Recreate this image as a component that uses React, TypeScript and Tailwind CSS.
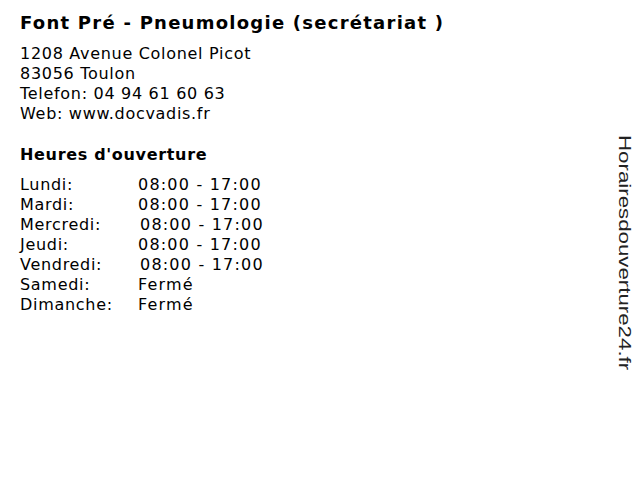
const hours: [string, string, boolean][] = [
  ["Lundi:", "08:00 - 17:00", false],
  ["Mardi:", "08:00 - 17:00", false],
  ["Mercredi:", "08:00 - 17:00", true],
  ["Jeudi:", "08:00 - 17:00", false],
  ["Vendredi:", "08:00 - 17:00", true],
  ["Samedi:", "Fermé", false],
  ["Dimanche:", "Fermé", false],
];

export default function App() {
  return (
    <div className="relative w-[640px] h-[480px] bg-white text-black font-['DejaVu_Sans',Verdana,sans-serif]">
      <div className="px-5 pt-[9px]">
        <h1 className="text-[18px] leading-[28px] font-bold tracking-[1.25px]">Font Pré - Pneumologie (secrétariat )</h1>
        <div className="mt-[7px] text-[16px] leading-[20px] tracking-[0.7px]">
          <p>1208 Avenue Colonel Picot</p>
          <p>83056 Toulon</p>
          <p>Telefon: 04 94 61 60 63</p>
          <p>Web: www.docvadis.fr</p>
        </div>
        <h2 className="mt-[20px] text-[16px] leading-[22px] font-bold tracking-[0.67px]">Heures d'ouverture</h2>
        <div className="mt-[9px] text-[16px] leading-[20px] tracking-[0.7px]">
          {hours.map(([day, time, shifted]) => (
            <div key={day} className="flex">
              <span className="w-[118px]">{day}</span>
              <span className={shifted ? "ml-[2px] tracking-[1.2px]" : "tracking-[1.2px]"}>{time}</span>
            </div>
          ))}
        </div>
      </div>
      <div className="absolute right-[6px] top-[135px] origin-top scale-y-[1.31] [writing-mode:vertical-rl] text-[17px] leading-[20px] text-[#222] font-['Liberation_Sans',Arial,sans-serif]">
        Horairesdouverture24.fr
      </div>
    </div>
  );
}
